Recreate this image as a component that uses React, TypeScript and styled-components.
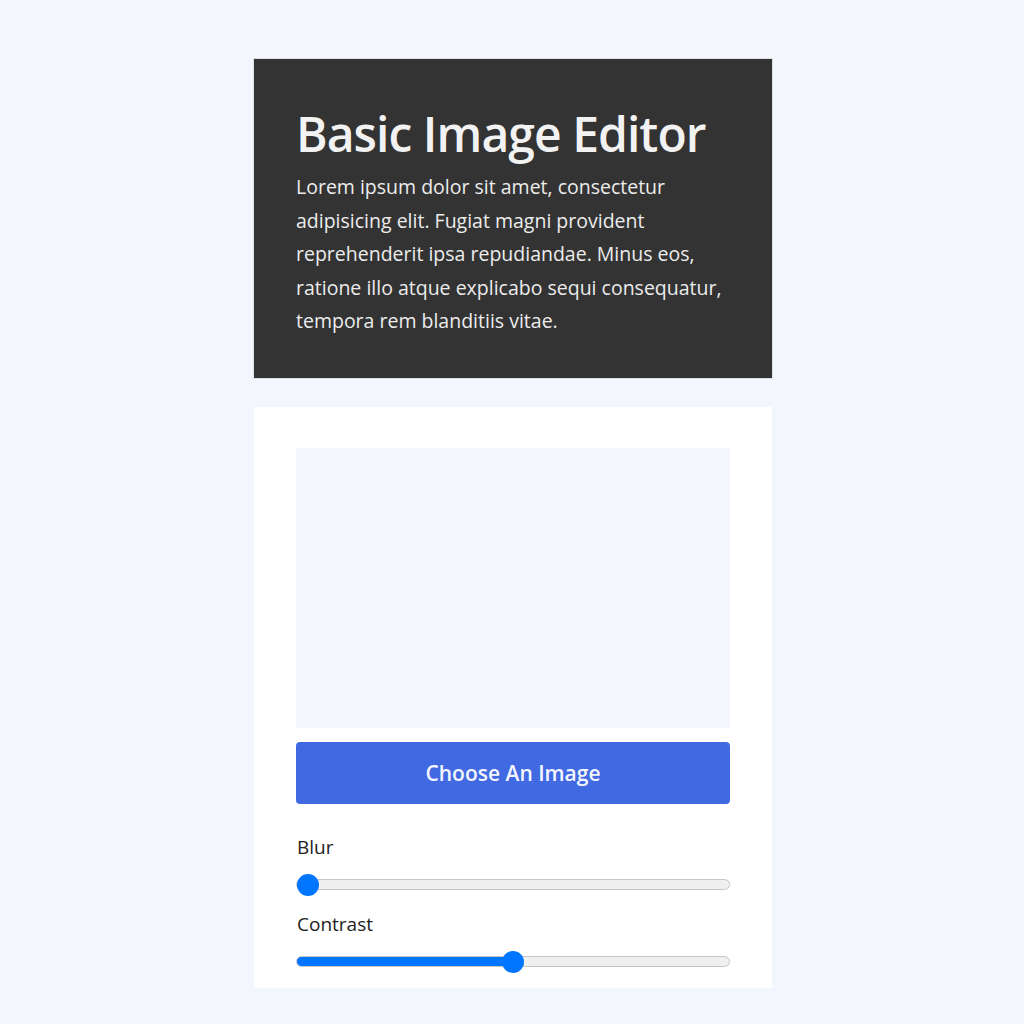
import React, { useState } from "react";
import styled, { createGlobalStyle } from "styled-components";

const GlobalStyle = createGlobalStyle`
  * { box-sizing: border-box; }
  html, body { margin: 0; padding: 0; }
  body {
    background: #f3f6fd;
    font-family: "Open Sans", "Noto Sans", sans-serif;
  }
`;

const Page = styled.main`
  width: 518px;
  margin: 0 0 0 calc(50% - 258px);
  padding: 59px 0 37px;
  display: flex;
  flex-direction: column;
  gap: 29px;
`;

const Header = styled.header`
  background: #333333;
  color: #f2f2f2;
  padding: 42px 42px 40px;
  box-shadow: 0 0 0 1px #8a8a8a33;
`;

const Title = styled.h1`
  margin: 0;
  font-size: 48px;
  font-weight: 600;
  line-height: 65px;
  letter-spacing: -0.95px;
`;

const Intro = styled.p`
  margin: 4px 0 0;
  font-size: 19.5px;
  line-height: 33.6px;
  color: #ececec;
`;

const Card = styled.section`
  background: #ffffff;
  padding: 41px 42px 15px;
  display: flex;
  flex-direction: column;
`;

const Preview = styled.div`
  height: 280px;
  background: #f3f6fd;
`;

const ChooseButton = styled.button`
  margin-top: 14px;
  height: 62px;
  border: none;
  border-radius: 4px;
  background: #4169e1;
  color: #f4f6ff;
  font-family: "Open Sans", sans-serif;
  font-size: 21px;
  font-weight: 600;
  cursor: pointer;
`;

const Control = styled.div<{ $first?: boolean }>`
  display: flex;
  flex-direction: column;
  margin-top: ${(p) => (p.$first ? "30px" : "15px")};
`;

const Label = styled.label`
  font-size: 19px;
  line-height: 27px;
  color: #222;
  padding-left: 1px;
`;

const Range = styled.input`
  -webkit-appearance: none;
  appearance: none;
  width: 100%;
  height: 22px;
  margin: 13px 0 0;
  background: transparent;
  cursor: pointer;

  &::-webkit-slider-runnable-track {
    height: 11px;
    border-radius: 6px;
    border: 1px solid #c6c6c6;
    background: linear-gradient(
      to right,
      #0075ff 0,
      #0075ff var(--fill),
      #efefef var(--fill),
      #efefef 100%
    );
  }
  &::-webkit-slider-thumb {
    -webkit-appearance: none;
    appearance: none;
    width: 22px;
    height: 22px;
    border-radius: 50%;
    background: #0075ff;
    border: none;
    margin-top: -6.5px;
  }
  &:focus { outline: none; }
`;

type SliderProps = { label: string; value: number; onChange: (v: number) => void; first?: boolean };

const Slider = ({ label, value, onChange, first }: SliderProps) => {
  const fill = `calc(11px + (100% - 22px) * ${value / 100})`;
  return (
    <Control $first={first}>
      <Label>{label}</Label>
      <Range
        type="range"
        min={0}
        max={100}
        value={value}
        onChange={(e) => onChange(Number(e.target.value))}
        style={{ ["--fill" as any]: value === 0 ? "0px" : fill }}
      />
    </Control>
  );
};

export default function App() {
  const [blur, setBlur] = useState(0);
  const [contrast, setContrast] = useState(50);
  return (
    <>
      <GlobalStyle />
      <Page>
        <Header>
          <Title>Basic Image Editor</Title>
          <Intro>
            Lorem ipsum dolor sit amet, consectetur adipisicing elit. Fugiat magni provident
            reprehenderit ipsa repudiandae. Minus eos, ratione illo atque explicabo sequi
            consequatur, tempora rem blanditiis vitae.
          </Intro>
        </Header>
        <Card>
          <Preview />
          <ChooseButton>Choose An Image</ChooseButton>
          <Slider label="Blur" value={blur} onChange={setBlur} first />
          <Slider label="Contrast" value={contrast} onChange={setContrast} />
        </Card>
      </Page>
    </>
  );
}
